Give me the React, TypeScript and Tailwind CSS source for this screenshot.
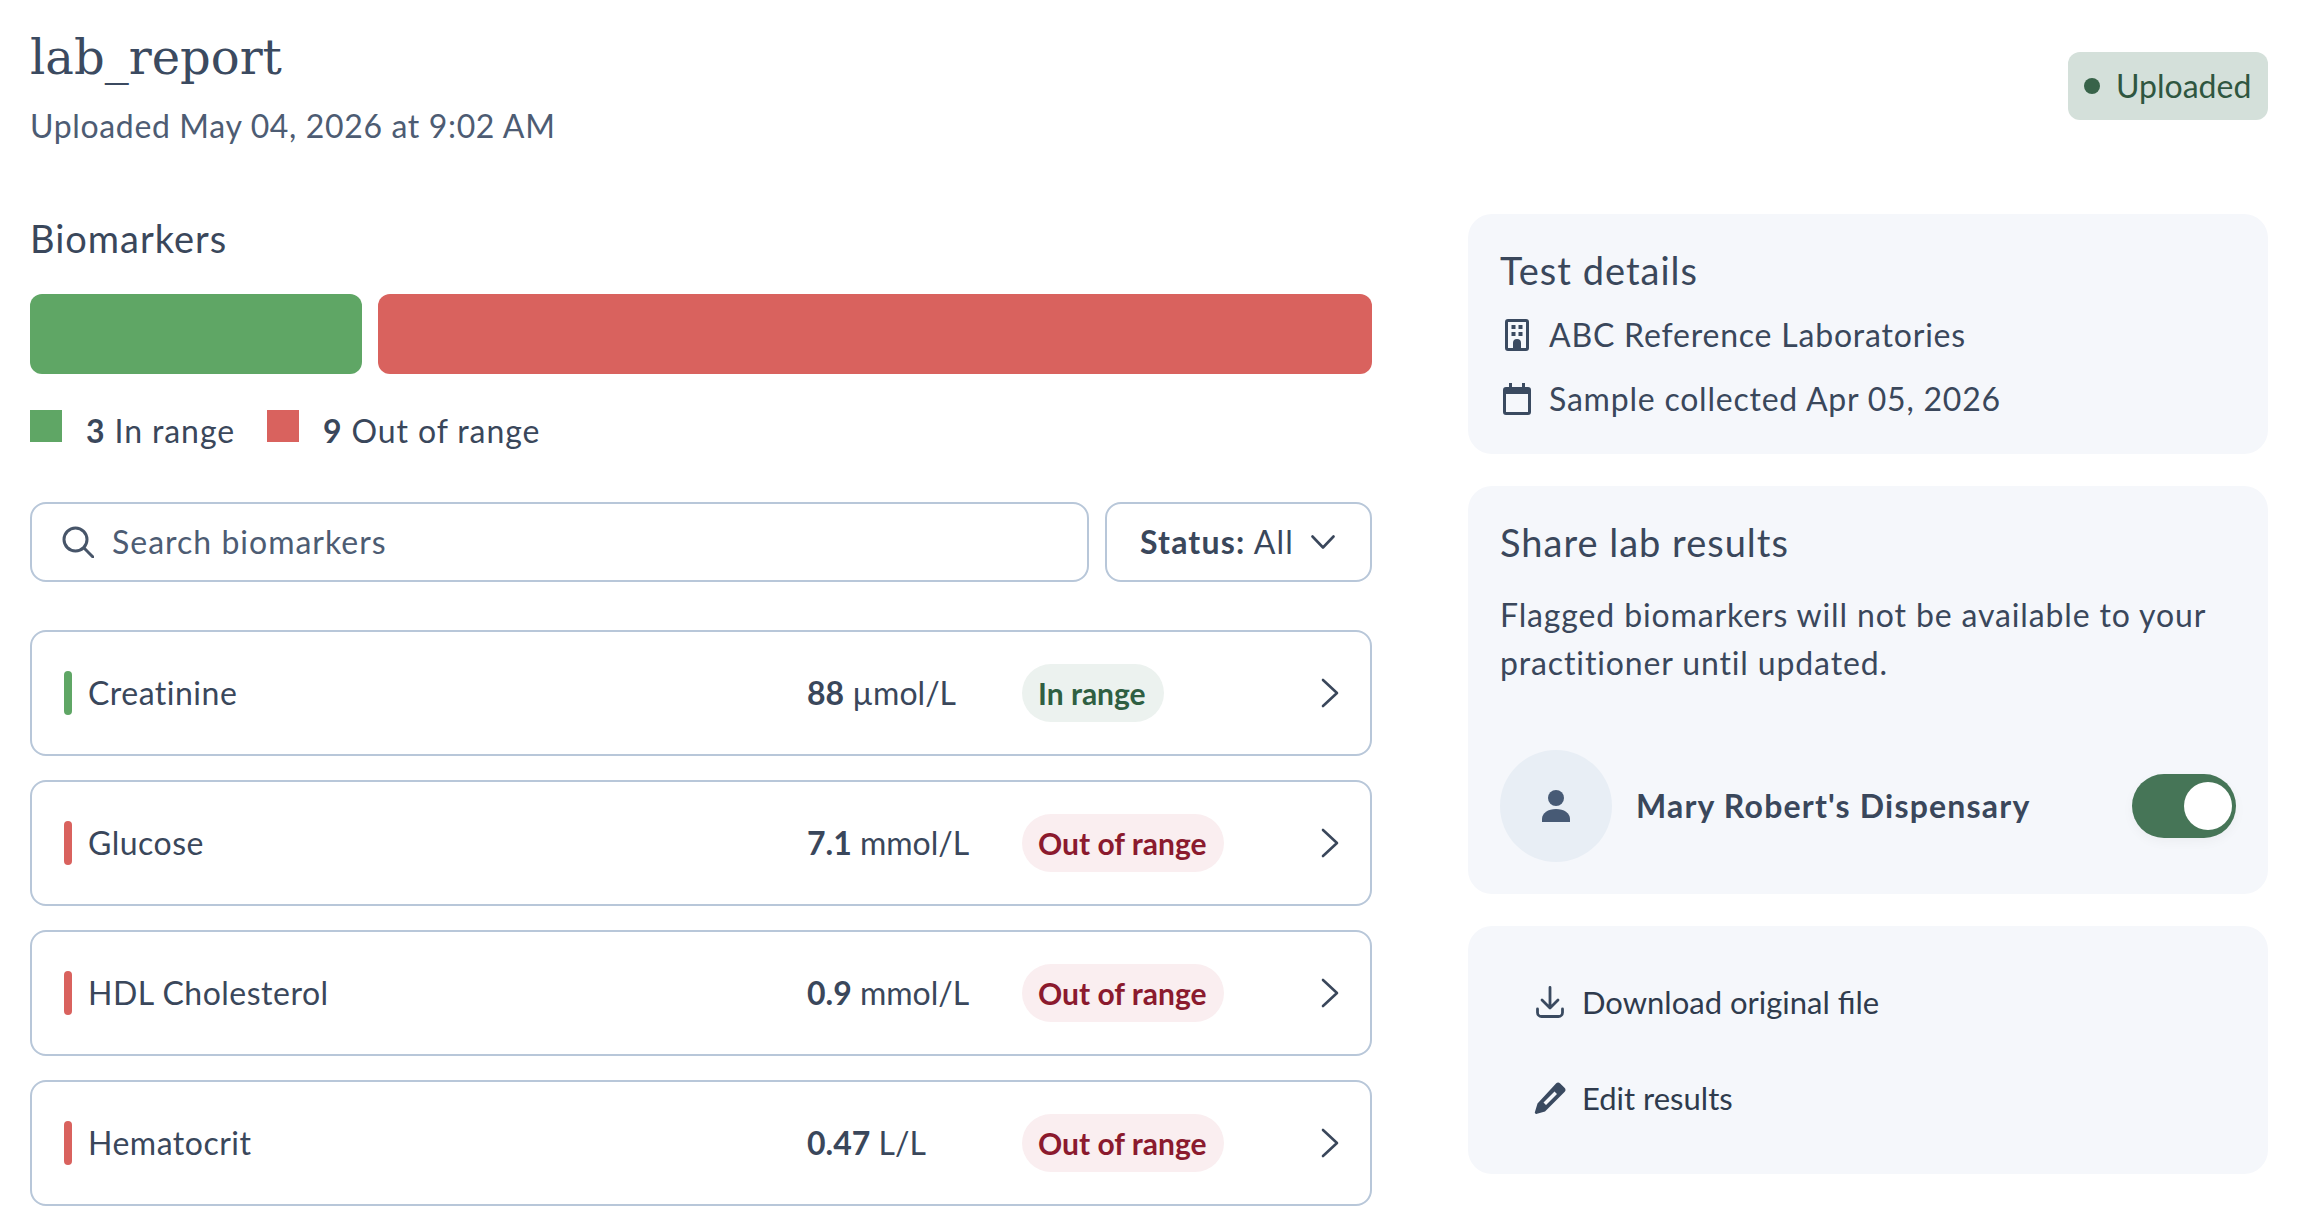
import { useState } from 'react'

const BIOMARKERS = [
  { name: 'Creatinine', value: '88', unit: 'µmol/L', inRange: true },
  { name: 'Glucose', value: '7.1', unit: 'mmol/L', inRange: false },
  { name: 'HDL Cholesterol', value: '0.9', unit: 'mmol/L', inRange: false },
  { name: 'Hematocrit', value: '0.47', unit: 'L/L', inRange: false },
]

function SearchIcon() {
  return (
    <svg width="32" height="32" viewBox="0 0 32 32" fill="none" stroke="#475569" strokeWidth="3" strokeLinecap="round">
      <circle cx="13.5" cy="13.5" r="11.5" />
      <path d="M22 22l9 9" />
    </svg>
  )
}

function ChevronRight() {
  return (
    <svg width="18" height="30" viewBox="0 0 18 30" fill="none" stroke="#3a475b" strokeWidth="2.6" strokeLinecap="round" strokeLinejoin="round">
      <path d="M2 2l14 13L2 28" />
    </svg>
  )
}

function ChevronDown() {
  return (
    <svg width="24" height="14" viewBox="0 0 24 14" fill="none" stroke="#3a475b" strokeWidth="2.6" strokeLinecap="round" strokeLinejoin="round">
      <path d="M1.5 1.5L12 12.5 22.5 1.5" />
    </svg>
  )
}

function BuildingIcon() {
  return (
    <svg width="24" height="32" viewBox="0 0 24 32">
      <path
        fill="#3a4a60"
        fillRule="evenodd"
        d="M3 0h18a3 3 0 013 3v26a3 3 0 01-3 3H3a3 3 0 01-3-3V3a3 3 0 013-3zm0 3v26h5v-5a4 4 0 018 0v5h5V3H3zm3.500 3h4v4h-4V6zm7 0h4v4h-4V6zm-7 7h4v4h-4v-4zm7 0h4v4h-4v-4z"
      />
    </svg>
  )
}

function CalendarIcon() {
  return (
    <svg width="28" height="32" viewBox="0 0 28 32">
      <path
        fill="#3a4a60"
        fillRule="evenodd"
        d="M6 0h3v4h10V0h3v4h3a3 3 0 013 3v22a3 3 0 01-3 3H3a3 3 0 01-3-3V7a3 3 0 013-3h3V0zM3 11v18h22V11H3z"
      />
    </svg>
  )
}

function PersonIcon() {
  return (
    <svg width="28" height="32" viewBox="0 0 28 32" fill="#475a75">
      <circle cx="14" cy="8" r="8" />
      <path d="M0 32v-3c0-6 6-10 14-10s14 4 14 10v3H0z" />
    </svg>
  )
}

function DownloadIcon() {
  return (
    <svg width="28" height="32" viewBox="0 0 28 32" fill="none" stroke="#3a4a60" strokeWidth="2.8" strokeLinecap="round" strokeLinejoin="round">
      <path d="M14 1.500v20M6 14l8 8 8-8" />
      <path d="M1.500 23v3.500a4 4 0 004 4h17a4 4 0 004-4V23" />
    </svg>
  )
}

function PencilIcon() {
  return (
    <svg width="32" height="32" viewBox="0 0 32 32">
      <path
        fill="#3a4a60"
        fillRule="evenodd"
        d="M22 1.500a3 3 0 014.200 0l4.300 4.300a3 3 0 010 4.200L11 29.500 3 31.800a1.500 1.500 0 01-2-2L3.500 21.500 22 1.500zM20.500 9.500L9.500 20.500l2.500 2.500L23 12l-2.500-2.500z"
      />
    </svg>
  )
}

function StatusPill({ inRange }: { inRange: boolean }) {
  return (
    <span
      className={
        inRange
          ? 'flex h-[58px] items-center rounded-full bg-[#ecf2ef] pl-[16px] pr-[18px] text-[30px] font-bold text-[#2f5f42]'
          : 'flex h-[58px] items-center rounded-full bg-[#faeef0] pl-[16px] pr-[18px] text-[30px] font-bold text-[#8b1a2e]'
      }
    >
      {inRange ? 'In range' : 'Out of range'}
    </span>
  )
}

export default function App() {
  const [shared, setShared] = useState(true)

  return (
    <div className="h-[1216px] w-[2312px] overflow-hidden bg-white pl-[30px] pr-[44px] font-[Lato,sans-serif] text-[32px] text-[#3a475b]">
      {/* Header */}
      <div className="flex h-[214px] items-start justify-between">
        <div>
          <h1 className="mt-[27px] font-['DejaVu_Serif',serif] text-[48px] leading-[60px] font-normal text-[#3b4a60]">lab_report</h1>
          <p className="mt-[15px] text-[32px] leading-[48px] tracking-[0.65px] text-[#4d5c73]">Uploaded May 04, 2026 at 9:02 AM</p>
        </div>
        <div className="mt-[52px] flex h-[68px] w-[200px] items-center gap-[16px] rounded-[12px] bg-[#d4e0da] pl-[16px] text-[32px] text-[#2f5640]">
          <span className="h-4 w-4 rounded-full bg-[#386349]" />
          Uploaded
        </div>
      </div>

      <div className="grid grid-cols-[1342px_800px] gap-x-[96px]">
        {/* Biomarkers */}
        <div>
          <h2 className="text-[38px] leading-[48px] font-normal tracking-[1px]">Biomarkers</h2>
          <div className="mt-[32px] flex h-[80px] gap-4">
            <div className="flex-[3] rounded-[12px] bg-[#5fa665]" />
            <div className="flex-[9] rounded-[12px] bg-[#d9625e]" />
          </div>
          <div className="mt-[36px] flex h-[48px] items-start tracking-[0.9px]">
            <span className="h-8 w-8 bg-[#5fa665]" />
            <span className="ml-6 leading-[42px]">
              <b className="font-bold">3</b> In range
            </span>
            <span className="ml-8 h-8 w-8 bg-[#d9625e]" />
            <span className="ml-6 leading-[42px]">
              <b className="font-bold">9</b> Out of range
            </span>
          </div>

          <div className="mt-[44px] flex h-[80px] gap-4">
            <div className="flex flex-1 items-center gap-[18px] rounded-[16px] border-2 border-[#b8c7d9] pl-[30px]">
              <SearchIcon />
              <span className="tracking-[1px] text-[#4d5c73]">Search biomarkers</span>
            </div>
            <div className="flex w-[267px] items-center rounded-[16px] border-2 border-[#b8c7d9] pl-[33px]">
              <span className="tracking-[1.2px]">
                <b className="font-bold">Status:</b> All
              </span>
              <span className="ml-[17px]">
                <ChevronDown />
              </span>
            </div>
          </div>

          <div className="mt-[48px] flex flex-col gap-[24px]">
            {BIOMARKERS.map((b) => (
              <div key={b.name} className="flex h-[126px] items-center rounded-[16px] border-2 border-[#b8c7d9] pl-[32px] pr-[31px]">
                <div className="flex w-[743px] shrink-0 items-center gap-[16px] tracking-[0.5px]">
                  <span className={b.inRange ? 'h-[44px] w-2 rounded-full bg-[#5fa665]' : 'h-[44px] w-2 rounded-full bg-[#d9625e]'} />
                  {b.name}
                </div>
                <div className="w-[215px] shrink-0">
                  <b className="font-bold">{b.value}</b> {b.unit}
                </div>
                <StatusPill inRange={b.inRange} />
                <span className="ml-auto">
                  <ChevronRight />
                </span>
              </div>
            ))}
          </div>
        </div>

        {/* Side cards */}
        <div className="flex flex-col gap-[32px]">
          <div className="h-[240px] rounded-[24px] bg-[#f5f7fb] px-[32px] pt-[32px]">
            <h3 className="text-[38px] leading-[48px] font-normal tracking-[1px]">Test details</h3>
            <div className="mt-[9px] flex h-[64px] items-center tracking-[0.8px]">
              <span className="flex w-[34px] justify-center">
                <BuildingIcon />
              </span>
              <span className="ml-[15px]">ABC Reference Laboratories</span>
            </div>
            <div className="flex h-[64px] items-center tracking-[0.78px]">
              <span className="flex w-[34px] justify-center">
                <CalendarIcon />
              </span>
              <span className="ml-[15px]">Sample collected Apr 05, 2026</span>
            </div>
          </div>

          <div className="h-[408px] rounded-[24px] bg-[#f5f7fb] px-[32px] pt-[32px]">
            <h3 className="text-[38px] leading-[48px] font-normal tracking-[1px]">Share lab results</h3>
            <p className="mt-[25px] leading-[48px] tracking-[0.87px]">Flagged biomarkers will not be available to your practitioner until updated.</p>
            <div className="mt-[63px] flex items-center">
              <span className="flex h-[112px] w-[112px] items-center justify-center rounded-full bg-[#e8eef5]">
                <PersonIcon />
              </span>
              <span className="ml-[24px] font-bold tracking-[1.2px]">Mary Robert's Dispensary</span>
              <button
                onClick={() => setShared(!shared)}
                className="ml-auto flex h-[64px] w-[104px] items-center justify-end rounded-full bg-[#467557] pr-1 shadow-[0_4px_12px_rgba(0,0,0,0.04)]"
              >
                <span className="h-12 w-12 rounded-full bg-white" />
              </button>
            </div>
          </div>

          <div className="h-[248px] rounded-[24px] bg-[#f5f7fb] py-[28px] pl-[66px] text-[31px]">
            <div className="flex h-[96px] items-center gap-[16px] text-[#2f3b4d]">
              <span className="flex w-[32px] justify-center">
                <DownloadIcon />
              </span>
              Download original file
            </div>
            <div className="flex h-[96px] items-center gap-[16px] text-[#2f3b4d]">
              <PencilIcon />
              Edit results
            </div>
          </div>
        </div>
      </div>
    </div>
  )
}
